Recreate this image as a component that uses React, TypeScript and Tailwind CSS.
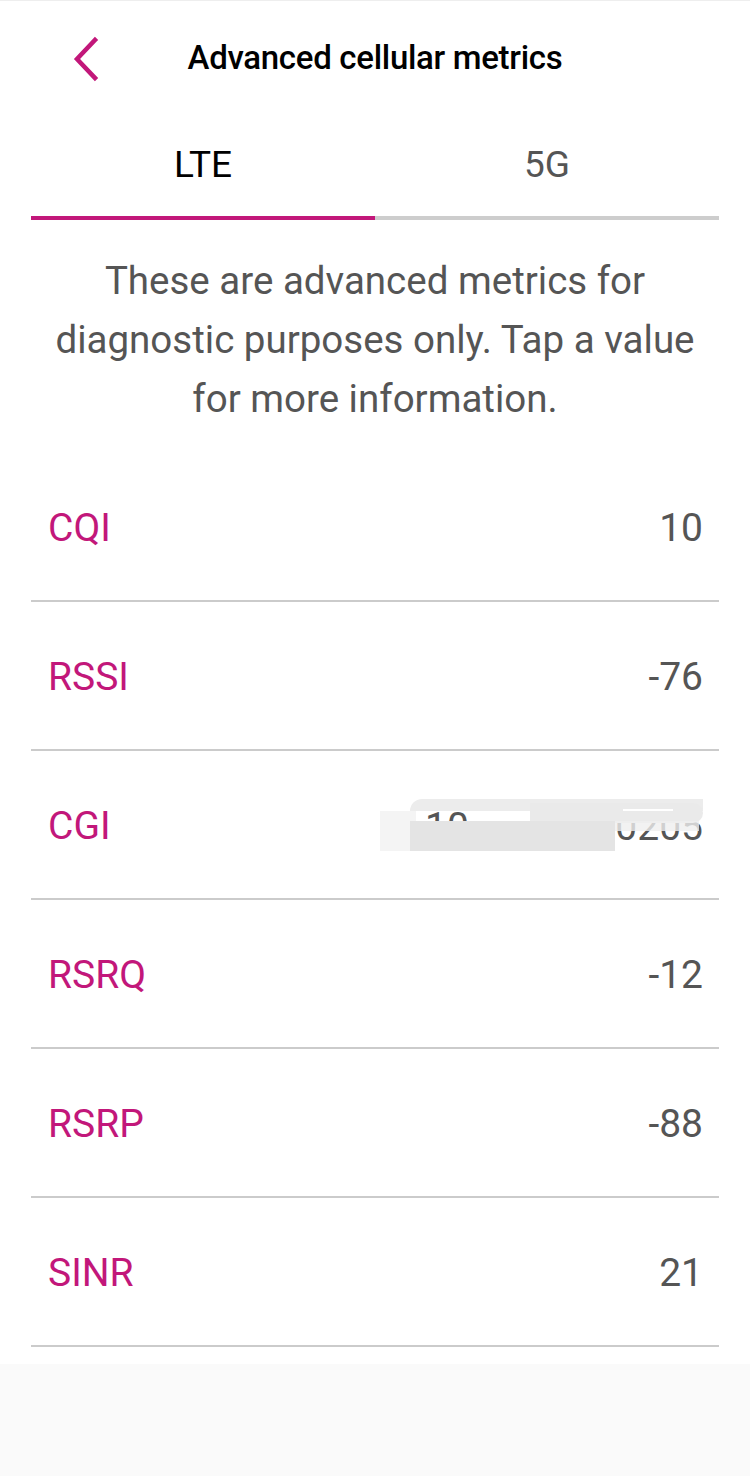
import { useState } from 'react'

const rows = [
  { label: 'CQI', value: '10' },
  { label: 'RSSI', value: '-76' },
  { label: 'CGI', value: '', hidden: true },
  { label: 'RSRQ', value: '-12' },
  { label: 'RSRP', value: '-88' },
  { label: 'SINR', value: '21' },
]

function BackChevron() {
  return (
    <svg width="40" height="48" viewBox="0 0 40 48" fill="none">
      <path d="M31 5 L13 24 L31 43" stroke="#c2177a" strokeWidth="4.5" strokeLinecap="square" strokeLinejoin="miter" />
    </svg>
  )
}

// smudge painted over the CGI value, as in the screenshot
function Redacted() {
  return (
    <div className="relative w-[323px] h-[52px] mt-[-4px] flex items-center justify-between pl-[45px] pt-[6px] text-[#555555]">
      <span>10</span>
      <span>0205</span>
      <div className="absolute left-0 top-[12px] w-[36px] h-[40px] bg-[#f4f4f4]" />
      <div className="absolute left-[30px] right-0 top-0 h-[12px] rounded-tl-full rounded-tr-[20px] bg-[#ececec]" />
      <div className="absolute left-[150px] right-0 top-[4px] h-[20px] rounded-r-[18px] bg-[#eaeaea]" />
      <div className="absolute left-[30px] right-[88px] top-[22px] h-[30px] bg-[#e4e4e4]" />
      <div className="absolute left-[235px] right-[4px] top-[22px] h-[10px] bg-[#efefef] opacity-80" />
      <div className="absolute right-[30px] top-[10px] w-[50px] h-[2px] bg-white" />
    </div>
  )
}

export default function App() {
  const [tab, setTab] = useState<'lte' | '5g'>('lte')

  return (
    <div className="w-[750px] h-[1476px] bg-[#fafafa] flex flex-col" style={{ fontFamily: 'Roboto, "Noto Sans", sans-serif' }}>
      <div className="bg-white border-t border-[#eeeeee] pb-[17px]">
        {/* Header */}
        <div className="relative h-[111px] flex items-center justify-center">
          <button className="absolute left-[64px] top-[34px]">
            <BackChevron />
          </button>
          <h1 className="text-[33px] font-medium text-black tracking-[-0.3px] mt-[3px]">Advanced cellular metrics</h1>
        </div>

        {/* Tabs */}
        <div className="mx-[31px]">
          <div className="flex h-[104px]">
            <button onClick={() => setTab('lte')} className={`flex-1 flex items-center justify-center text-[37px] pt-[2px] ${tab === 'lte' ? 'text-black' : 'text-[#555555]'}`}>
              LTE
            </button>
            <button onClick={() => setTab('5g')} className={`flex-1 flex items-center justify-center text-[37px] pt-[2px] ${tab === '5g' ? 'text-black' : 'text-[#555555]'}`}>
              5G
            </button>
          </div>
          <div className="flex h-[4px]">
            <div className={`flex-1 ${tab === 'lte' ? 'bg-[#c2177a]' : 'bg-[#cdcdcd]'}`} />
            <div className={`flex-1 ${tab === '5g' ? 'bg-[#c2177a]' : 'bg-[#cdcdcd]'}`} />
          </div>
        </div>

        {/* Description */}
        <p className="px-[40px] pt-[31px] text-center text-[38.5px] leading-[59px] text-[#555555]">
          These are advanced metrics for diagnostic purposes only. Tap a value for more information.
        </p>

        {/* Metrics */}
        <div className="mx-[31px] mt-[25px]">
          {rows.map((r) => (
            <div key={r.label} className="h-[149px] border-b-2 border-[#cbcbcb] flex items-center justify-between pl-[17px] pr-[16px] pt-[4px] text-[39px]">
              <span className="text-[#c2177a]">{r.label}</span>
              {r.hidden ? <Redacted /> : <span className="text-[#555555]">{r.value}</span>}
            </div>
          ))}
        </div>
      </div>
    </div>
  )
}
